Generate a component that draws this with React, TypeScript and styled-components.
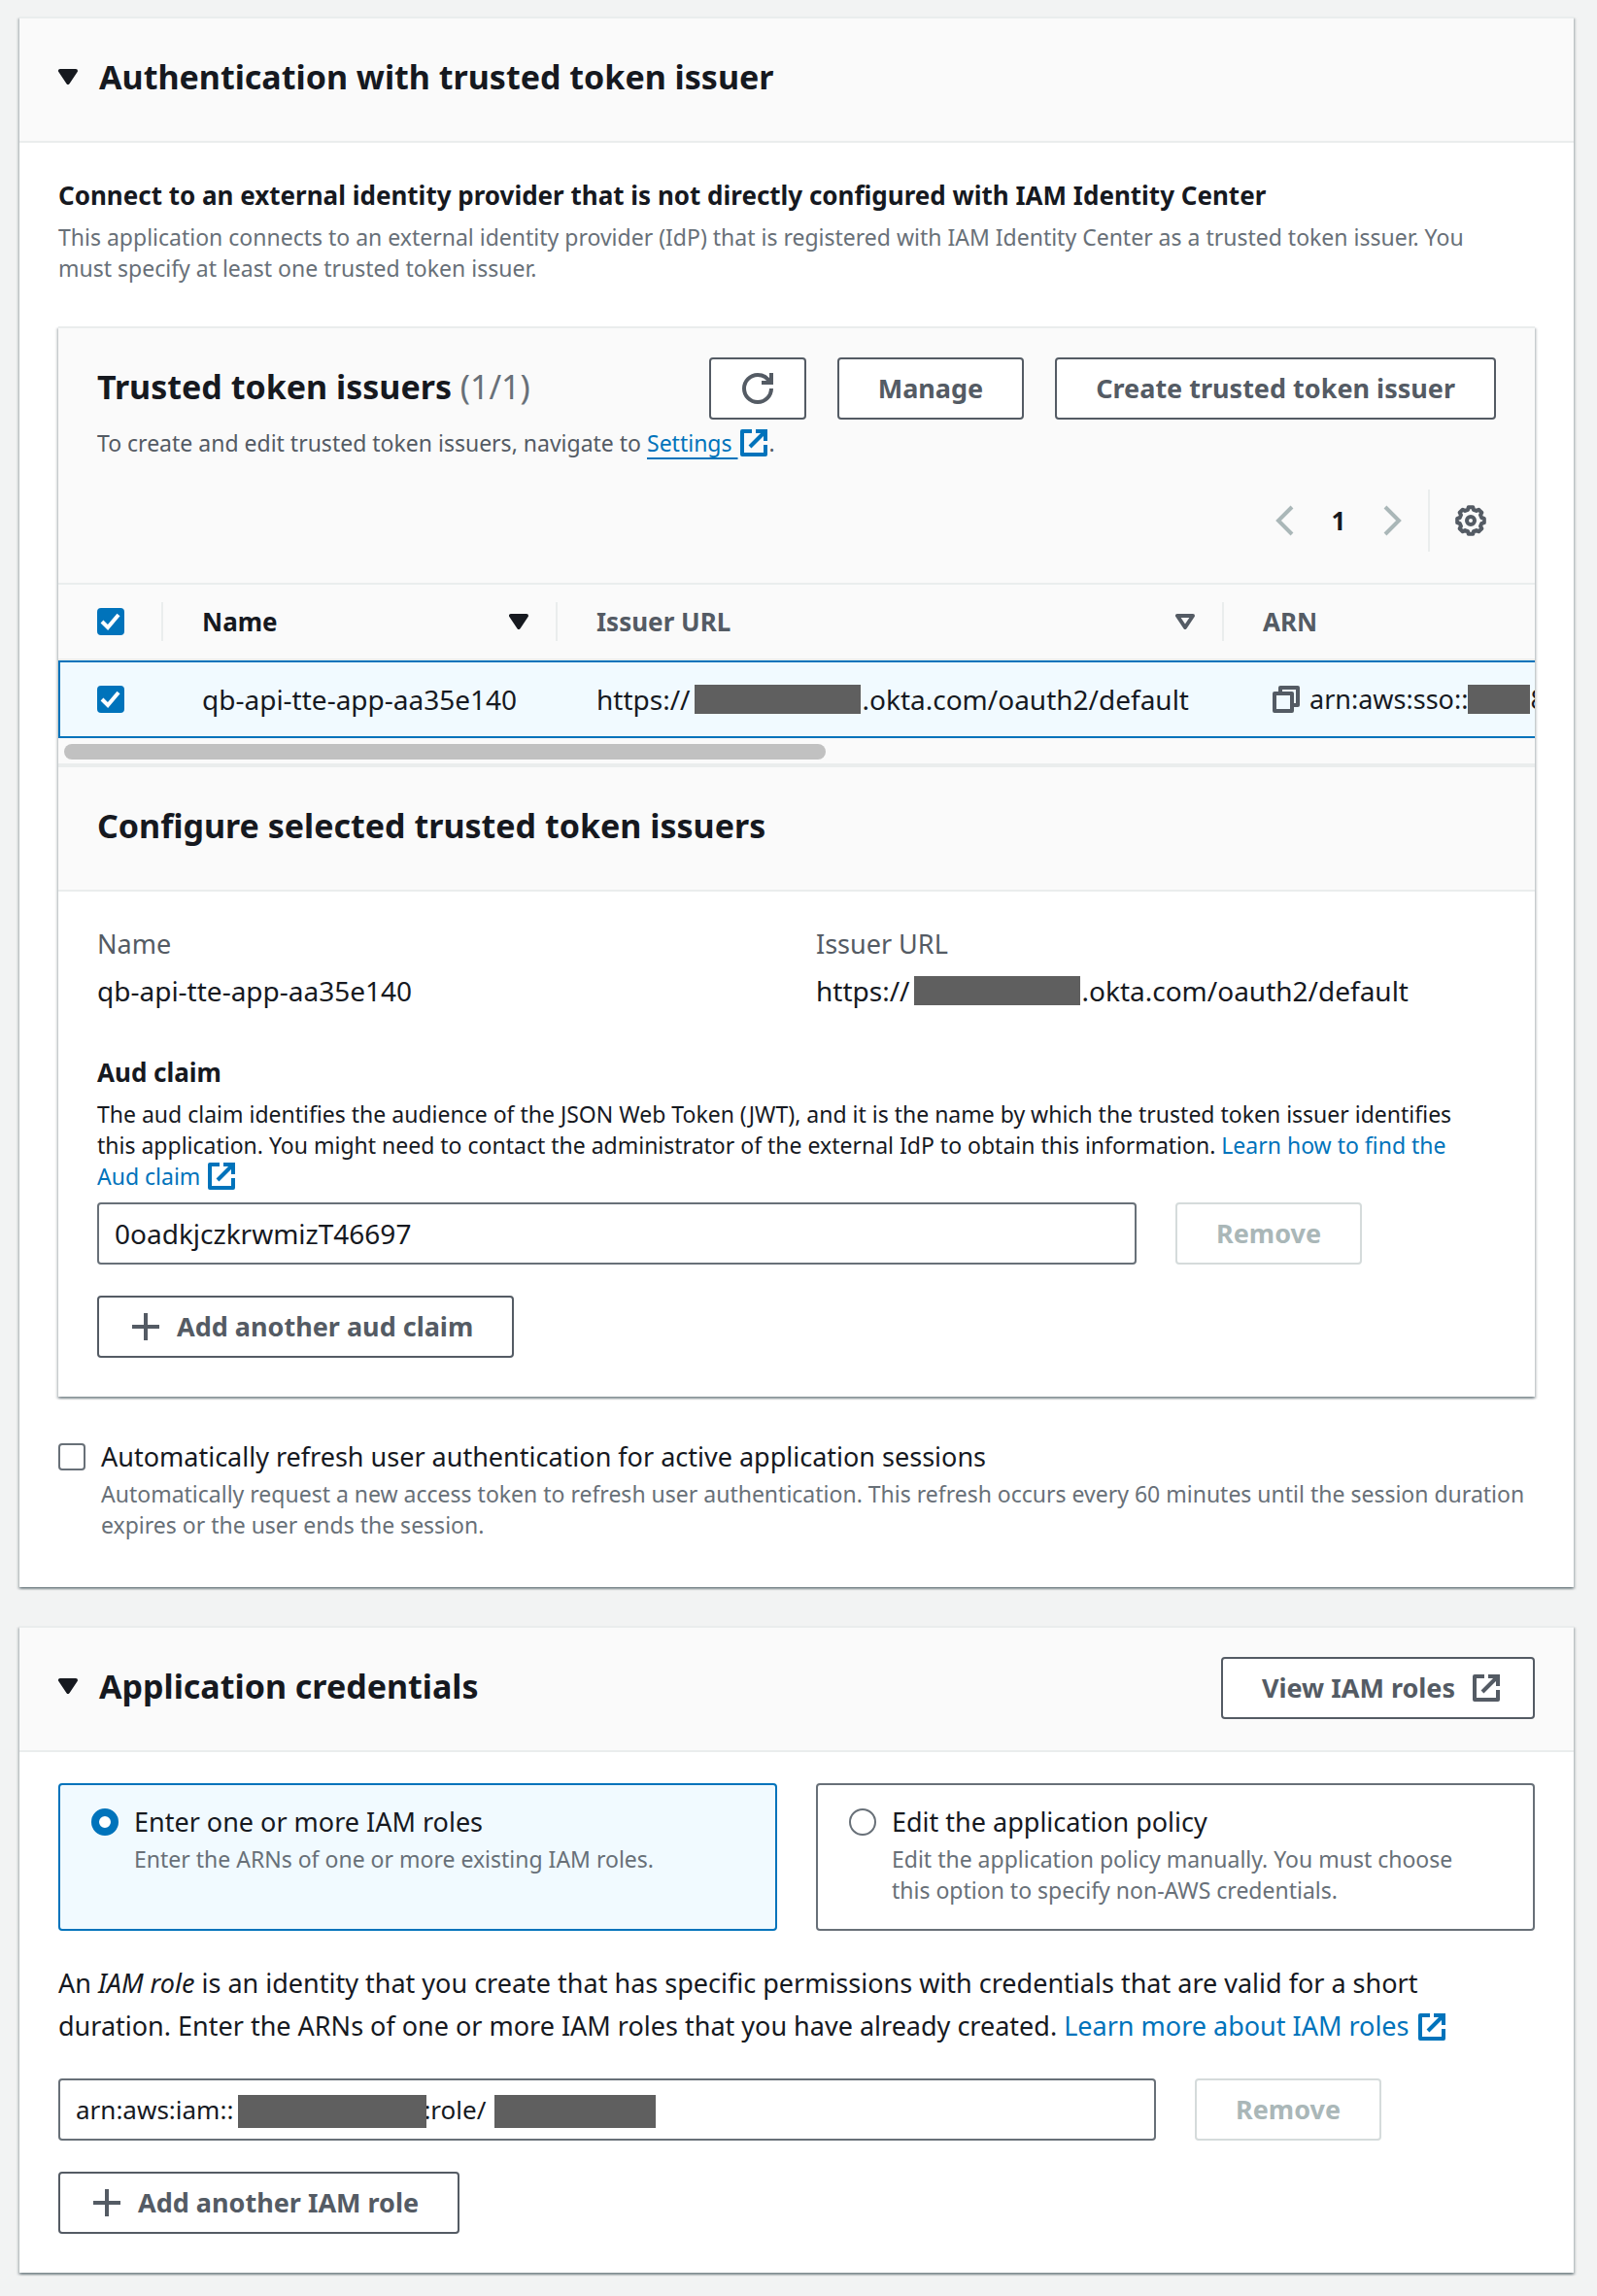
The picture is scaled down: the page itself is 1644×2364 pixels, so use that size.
import React, { useState } from 'react';
import styled, { createGlobalStyle, css } from 'styled-components';

const color = {
  page: '#f2f3f3',
  panel: '#ffffff',
  header: '#fafafa',
  line: '#eaeded',
  text: '#16191f',
  label: '#545b64',
  hint: '#687078',
  link: '#0073bb',
  selected: '#f1faff',
  disabledText: '#aab7b8',
  disabledLine: '#d5dbdb',
  thumb: '#c1c1c1',
  redacted: '#5f5f5f',
};

const size = { title: '34px', data: '28px', body: '27px', strong: '26px', small: '23px' };

const GlobalStyle = createGlobalStyle`
  *, *::before, *::after { box-sizing: border-box; }
  body {
    margin: 0;
    background: ${color.page};
    color: ${color.text};
    font-family: "Noto Sans", "Open Sans", sans-serif;
    font-size: ${size.body};
    line-height: 44px;
  }
  h2, h3, p, dl, dt, dd { margin: 0; }
  button, input { font-family: inherit; }
`;

const Page = styled.main`
  display: flex;
  flex-direction: column;
  gap: 40px;
  padding: 17px 24px 24px 20px;
`;

const Panel = styled.section`
  min-width: 0;
  border-top: 2px solid ${color.line};
  background: ${color.panel};
  box-shadow: 0 2px 2px 0 rgba(0, 28, 36, 0.3), 2px 2px 2px 0 rgba(0, 28, 36, 0.15),
    -2px 2px 2px 0 rgba(0, 28, 36, 0.15);
`;

const PanelHeader = styled.header`
  padding: 30px 40px 32px;
  border-bottom: 2px solid ${color.line};
  background: ${color.header};
`;

const HeaderRow = styled.div`
  display: flex;
  align-items: flex-start;
  justify-content: space-between;
  gap: 32px;
  min-height: 64px;
`;

const Title = styled.h2`
  font-size: ${size.title};
  font-weight: 700;
  line-height: 60px;
`;

const Counter = styled.span`
  color: ${color.hint};
  font-weight: 400;
`;

const Toggle = styled.button`
  display: flex;
  align-items: center;
  gap: 22px;
  padding: 0;
  border: 0;
  background: none;
  color: inherit;
  font-size: inherit;
  font-weight: inherit;
  line-height: inherit;
  text-align: left;
`;

const PanelBody = styled.div`
  padding: ${({ $bottom = 40 }: { $bottom?: number }) => `32px 40px ${$bottom}px`};
`;

const Actions = styled.div`
  display: flex;
  gap: 32px;
`;

const Button = styled.button<{ $icon?: 'only' | 'left' | 'right' }>`
  display: inline-flex;
  align-items: center;
  gap: 18px;
  height: 64px;
  padding: 0 ${({ $icon }) => ($icon === 'only' ? '32px' : '40px')};
  ${({ $icon }) => $icon === 'left' && css`padding-left: 34px;`}
  ${({ $icon }) => $icon === 'right' && css`padding-right: 34px;`}
  border: 2px solid ${color.label};
  border-radius: 4px;
  background: ${color.panel};
  color: ${color.label};
  font-size: ${size.body};
  font-weight: 700;
  line-height: 40px;
  white-space: nowrap;

  &:disabled {
    border-color: ${color.disabledLine};
    color: ${color.disabledText};
  }
`;

const Glyph = styled.svg`
  display: block;
  flex: none;
  fill: none;
  stroke: currentColor;
  stroke-width: 2;
`;

const LinkGlyph = styled(Glyph)`
  display: inline-block;
  margin: 0 2px;
  vertical-align: -5px;
`;

const Link = styled.a`
  color: ${color.link};
  text-decoration: none;
`;

const Underlined = styled.span`
  text-decoration: underline;
  text-decoration-thickness: 2px;
  text-decoration-skip-ink: none;
  text-underline-offset: 6px;
`;

const StrongLabel = styled.h3`
  font-size: ${size.strong};
  font-weight: 700;
  line-height: 44px;
`;

const FieldLabel = styled(StrongLabel).attrs({ as: 'label' })`
  display: block;
`;

const Small = styled.p`
  color: ${color.hint};
  font-size: ${size.small};
  line-height: 32px;
`;

const Description = styled(Small)<{ $tone?: string; $gap?: number }>`
  margin-top: ${({ $gap = 5 }) => $gap}px;
  padding-right: 24px;
  color: ${({ $tone = color.hint }) => $tone};
`;

const Nested = styled.div`
  margin: 44px 0 40px;
`;

const Pager = styled.nav`
  display: flex;
  align-items: center;
  justify-content: flex-end;
  height: 64px;
  margin-top: 32px;
`;

const BareButton = styled.button`
  display: flex;
  padding: 0;
  border: 0;
  background: none;
  color: ${color.label};

  &:disabled { color: ${color.disabledText}; }
`;

const PageNumber = styled(BareButton)`
  justify-content: center;
  width: 80px;
  color: ${color.text};
  font-size: ${size.strong};
  font-weight: 700;
`;

const Preferences = styled.div`
  display: flex;
  align-items: center;
  height: 64px;
  margin-left: 20px;
  padding: 0 10px 0 26px;
  border-left: 2px solid ${color.line};
`;

const TableScroll = styled.div`
  overflow: hidden;
  background: ${color.header};
`;

const Table = styled.table`
  width: 190%;
  border-collapse: separate;
  border-spacing: 0;
  table-layout: fixed;
`;

const Col = styled.col<{ $width?: number }>`
  ${({ $width }) => $width && css`width: ${$width}px;`}
`;

const HeadCell = styled.th<{ $active?: boolean }>`
  height: 78px;
  padding: 0;
  border-bottom: 2px solid ${color.line};
  color: ${({ $active }) => ($active ? color.text : color.label)};
  font-size: ${size.strong};
  font-weight: 700;
  text-align: left;
`;

const HeadContent = styled.div<{ $last?: boolean }>`
  display: flex;
  align-items: center;
  justify-content: space-between;
  height: 40px;
  padding: 0 28px 0 40px;
  border-right: ${({ $last }) => ($last ? '0' : `2px solid ${color.line}`)};
`;

const Cell = styled.td`
  height: 80px;
  padding: 0 0 0 40px;
  border: 2px solid ${color.link};
  border-width: 2px 0;
  background: ${color.selected};
  font-size: ${size.data};

  &:first-child { padding-left: 38px; border-left-width: 2px; }
`;

const ArnCell = styled(Cell)`
  font-size: ${size.body};
`;

const Inline = styled.div`
  display: flex;
  align-items: center;
  white-space: nowrap;
`;

const CopyButton = styled(BareButton)`
  margin: 0 10px;
`;

const Redacted = styled.span<{ $width: number }>`
  flex: none;
  width: ${({ $width }) => $width}px;
  height: 30px;
  background: ${color.redacted};
`;

const HostRedacted = styled(Redacted)`
  margin: 0 2px 0 4px;
`;

const ScrollTrack = styled.div`
  padding: 6px 6px 4px;
  border-bottom: 4px solid ${color.line};
  background: ${color.header};
`;

const ScrollThumb = styled.div`
  width: 52%;
  height: 16px;
  border-radius: 8px;
  background: ${color.thumb};
`;

const CheckFrame = styled.span`
  display: grid;
  flex: none;
  width: 28px;
  height: 28px;

  > * { grid-area: 1 / 1; }
  > svg { color: #fff; stroke-width: 4; pointer-events: none; }
`;

const CheckInput = styled.input.attrs({ type: 'checkbox' })`
  appearance: none;
  width: 28px;
  height: 28px;
  margin: 0;
  border: 2px solid ${color.hint};
  border-radius: 4px;
  background: ${color.panel};

  &:checked { border-color: ${color.link}; background: ${color.link}; }
`;

const RadioInput = styled.input.attrs({ type: 'radio' })`
  appearance: none;
  flex: none;
  width: 28px;
  height: 28px;
  margin: 8px 0;
  border: 2px solid ${color.hint};
  border-radius: 50%;
  background: ${color.panel};

  &:checked { border: 8px solid ${color.link}; }
`;

const Details = styled.dl`
  display: grid;
  grid-template-columns: 1fr 1fr;
  gap: 40px;
  margin-bottom: 40px;

  dt { margin-bottom: 4px; color: ${color.label}; font-size: ${size.body}; }
  dd { font-size: ${size.data}; }
`;

const FieldRow = styled.div`
  display: grid;
  grid-template-columns: repeat(4, 1fr);
  gap: 40px;
  margin: ${({ $top }: { $top: number }) => $top}px 0 32px;

  > :first-child { grid-column: span 3; }
  > :last-child { justify-self: start; }
`;

const InputFrame = styled.div`
  position: relative;
`;

const TextInput = styled.input.attrs({ type: 'text' })<{ $compact?: boolean }>`
  display: block;
  width: 100%;
  height: 64px;
  padding: 0 16px;
  border: 2px solid ${color.hint};
  border-radius: 4px;
  background: ${color.panel};
  color: ${color.text};
  font-size: ${({ $compact }) => ($compact ? size.strong : size.data)};
`;

const Cover = styled.span<{ $left: number; $width: number }>`
  position: absolute;
  top: 17px;
  left: ${({ $left }) => $left}px;
  width: ${({ $width }) => $width}px;
  height: 34px;
  background: ${color.redacted};
`;

const Option = styled.label`
  display: flex;
  gap: 16px;

  > ${CheckFrame} { margin: 8px 0; }
`;

const OptionText = styled.span`
  display: block;
`;

const Hint = styled(Small).attrs({ as: 'span' })`
  display: block;
`;

const Tiles = styled.div`
  display: grid;
  grid-template-columns: 1fr 1fr;
  gap: 40px;
  margin-bottom: 32px;
`;

const Tile = styled(Option)<{ $selected: boolean }>`
  padding: 16px 40px 24px 32px;
  border: 2px solid ${({ $selected }) => ($selected ? color.link : color.hint)};
  border-radius: 4px;
  background: ${({ $selected }) => ($selected ? color.selected : color.panel)};
`;

const TriangleIcon = ({ hollow }: { hollow?: boolean }) => (
  <Glyph width="20" height="16" viewBox="3 4 10 8" strokeLinejoin="round" aria-hidden="true">
    <path d="M4 5h8l-4 6z" fill={hollow ? 'none' : 'currentColor'} />
  </Glyph>
);

const externalShape = (
  <>
    <path d="M10 2h4v4" strokeLinecap="square" />
    <path d="m6 10 8-8" />
    <path d="M14 9.05V14H2V2h5" strokeLinejoin="round" />
  </>
);

const ExternalIcon = () => (
  <Glyph width="28" height="28" viewBox="1 1 14 14" aria-hidden="true">{externalShape}</Glyph>
);

const ExternalLinkIcon = () => (
  <LinkGlyph width="28" height="28" viewBox="1 1 14 14" role="img" aria-label="Opens in a new tab">
    {externalShape}
  </LinkGlyph>
);

const RefreshIcon = () => (
  <Glyph width="32" height="32" viewBox="0 0 16 16" aria-hidden="true">
    <path d="M10 5h5V0" />
    <path d="M15 8c0 3.87-3.13 7-7 7s-7-3.13-7-7 3.13-7 7-7c2.79 0 5.2 1.63 6.33 4" />
  </Glyph>
);

const ChevronIcon = ({ next }: { next?: boolean }) => (
  <Glyph width="32" height="32" viewBox="0 0 16 16" aria-hidden="true">
    <path d={next ? 'm4 1 7 7-7 7' : 'M12 1 5 8l7 7'} />
  </Glyph>
);

const gearOutline = (() => {
  const points: string[] = [];
  const add = (degrees: number, radius: number) => {
    const a = (degrees * Math.PI) / 180;
    points.push(`${(8 + radius * Math.cos(a)).toFixed(2)} ${(8 + radius * Math.sin(a)).toFixed(2)}`);
  };
  for (let tooth = 0; tooth < 8; tooth += 1) {
    const mid = tooth * 45;
    add(mid - 15, 5.8);
    add(mid - 9, 7);
    add(mid + 9, 7);
    add(mid + 15, 5.8);
  }
  return `M${points.join('L')}Z`;
})();

const GearIcon = () => (
  <Glyph width="32" height="32" viewBox="0 0 16 16" strokeLinejoin="round" aria-hidden="true">
    <path d={gearOutline} />
    <circle cx="8" cy="8" r="2" />
  </Glyph>
);

const CopyIcon = () => (
  <Glyph width="28" height="28" viewBox="1 1 14 14" strokeLinejoin="round" aria-hidden="true">
    <path d="M2 5h9v9H2z" />
    <path d="M5 5V2h9v9h-3" />
  </Glyph>
);

const PlusIcon = () => (
  <Glyph width="28" height="28" viewBox="1 1 14 14" aria-hidden="true">
    <path d="M8 1v14M1 8h14" />
  </Glyph>
);

type CheckboxProps = {
  id?: string;
  label?: string;
  checked: boolean;
  onChange: (value: boolean) => void;
};

const Checkbox = ({ id, label, checked, onChange }: CheckboxProps) => (
  <CheckFrame>
    <CheckInput
      id={id}
      aria-label={label}
      checked={checked}
      onChange={(event) => onChange(event.target.checked)}
    />
    {checked && (
      <Glyph width="28" height="28" viewBox="0 0 28 28" aria-hidden="true">
        <path d="m5 14 6 6L22 7" />
      </Glyph>
    )}
  </CheckFrame>
);

const IssuerUrl = () => (
  <Inline>
    https://
    <HostRedacted $width={171} />
    .okta.com/oauth2/default
  </Inline>
);

const gap = (count: number) => '\u00a0'.repeat(count);

export default function App() {
  const [selected, setSelected] = useState(true);
  const [refresh, setRefresh] = useState(false);
  const [mode, setMode] = useState<'roles' | 'policy'>('roles');
  const [aud, setAud] = useState('0oadkjczkrwmizT46697');
  const [role, setRole] = useState(`arn:aws:iam::${gap(29)}:role/`);

  return (
    <>
      <GlobalStyle />
      <Page>
        <Panel>
          <PanelHeader>
            <HeaderRow>
              <Title>
                <Toggle type="button" aria-expanded="true">
                  <TriangleIcon />
                  Authentication with trusted token issuer
                </Toggle>
              </Title>
            </HeaderRow>
          </PanelHeader>
          <PanelBody $bottom={48}>
            <StrongLabel>
              Connect to an external identity provider that is not directly configured with IAM Identity Center
            </StrongLabel>
            <Description>
              This application connects to an external identity provider (IdP) that is registered with IAM
              Identity Center as a trusted token issuer. You must specify at least one trusted token issuer.
            </Description>

            <Nested>
              <Panel>
                <PanelHeader>
                  <HeaderRow>
                    <Title>
                      Trusted token issuers <Counter>(1/1)</Counter>
                    </Title>
                    <Actions>
                      <Button type="button" $icon="only" aria-label="Refresh"><RefreshIcon /></Button>
                      <Button type="button">Manage</Button>
                      <Button type="button">Create trusted token issuer</Button>
                    </Actions>
                  </HeaderRow>
                  <Description $tone={color.label} $gap={8}>
                    To create and edit trusted token issuers, navigate to{' '}
                    <Link href="#settings"><Underlined>Settings </Underlined><ExternalLinkIcon /></Link>.
                  </Description>
                  <Pager aria-label="Pagination">
                    <BareButton type="button" disabled aria-label="Previous page"><ChevronIcon /></BareButton>
                    <PageNumber type="button">1</PageNumber>
                    <BareButton type="button" disabled aria-label="Next page"><ChevronIcon next /></BareButton>
                    <Preferences>
                      <BareButton type="button" aria-label="Preferences"><GearIcon /></BareButton>
                    </Preferences>
                  </Pager>
                </PanelHeader>

                <TableScroll>
                  <Table>
                    <colgroup>
                      <Col $width={108} />
                      <Col $width={406} />
                      <Col $width={686} />
                      <Col />
                    </colgroup>
                    <thead>
                      <tr>
                        <HeadCell scope="col">
                          <HeadContent>
                            <Checkbox label="Select all issuers" checked={selected} onChange={setSelected} />
                          </HeadContent>
                        </HeadCell>
                        <HeadCell scope="col" $active>
                          <HeadContent>Name <TriangleIcon /></HeadContent>
                        </HeadCell>
                        <HeadCell scope="col">
                          <HeadContent>Issuer URL <TriangleIcon hollow /></HeadContent>
                        </HeadCell>
                        <HeadCell scope="col">
                          <HeadContent $last>ARN</HeadContent>
                        </HeadCell>
                      </tr>
                    </thead>
                    <tbody>
                      <tr>
                        <Cell>
                          <Checkbox label="Select qb-api-tte-app-aa35e140" checked={selected} onChange={setSelected} />
                        </Cell>
                        <Cell>qb-api-tte-app-aa35e140</Cell>
                        <Cell><IssuerUrl /></Cell>
                        <ArnCell>
                          <Inline>
                            <CopyButton type="button" aria-label="Copy ARN"><CopyIcon /></CopyButton>
                            arn:aws:sso::
                            <Redacted $width={64} />
                            8
                          </Inline>
                        </ArnCell>
                      </tr>
                    </tbody>
                  </Table>
                </TableScroll>
                <ScrollTrack><ScrollThumb /></ScrollTrack>

                <PanelHeader>
                  <HeaderRow>
                    <Title as="h3">Configure selected trusted token issuers</Title>
                  </HeaderRow>
                </PanelHeader>
                <PanelBody>
                  <Details>
                    <div>
                      <dt>Name</dt>
                      <dd>qb-api-tte-app-aa35e140</dd>
                    </div>
                    <div>
                      <dt>Issuer URL</dt>
                      <dd><IssuerUrl /></dd>
                    </div>
                  </Details>
                  <FieldLabel htmlFor="aud-claim">Aud claim</FieldLabel>
                  <Description $tone={color.text}>
                    The aud claim identifies the audience of the JSON Web Token (JWT), and it is the name by which
                    the trusted token issuer identifies this application. You might need to contact the
                    administrator of the external IdP to obtain this information.{' '}
                    <Link href="#aud-claim-help">Learn how to find the Aud claim <ExternalLinkIcon /></Link>
                  </Description>
                  <FieldRow $top={11}>
                    <TextInput id="aud-claim" value={aud} onChange={(event) => setAud(event.target.value)} />
                    <Button type="button" disabled>Remove</Button>
                  </FieldRow>
                  <Button type="button" $icon="left"><PlusIcon />Add another aud claim</Button>
                </PanelBody>
              </Panel>
            </Nested>

            <Option>
              <Checkbox checked={refresh} onChange={setRefresh} />
              <OptionText>
                Automatically refresh user authentication for active application sessions
                <Hint>
                  Automatically request a new access token to refresh user authentication. This refresh occurs
                  every 60 minutes until the session duration expires or the user ends the session.
                </Hint>
              </OptionText>
            </Option>
          </PanelBody>
        </Panel>

        <Panel>
          <PanelHeader>
            <HeaderRow>
              <Title>
                <Toggle type="button" aria-expanded="true">
                  <TriangleIcon />
                  Application credentials
                </Toggle>
              </Title>
              <Button type="button" $icon="right">View IAM roles<ExternalIcon /></Button>
            </HeaderRow>
          </PanelHeader>
          <PanelBody>
            <Tiles role="radiogroup" aria-label="Credential type">
              <Tile $selected={mode === 'roles'}>
                <RadioInput name="mode" checked={mode === 'roles'} onChange={() => setMode('roles')} />
                <OptionText>
                  Enter one or more IAM roles
                  <Hint>Enter the ARNs of one or more existing IAM roles.</Hint>
                </OptionText>
              </Tile>
              <Tile $selected={mode === 'policy'}>
                <RadioInput name="mode" checked={mode === 'policy'} onChange={() => setMode('policy')} />
                <OptionText>
                  Edit the application policy
                  <Hint>
                    Edit the application policy manually. You must choose this option to specify non-AWS
                    credentials.
                  </Hint>
                </OptionText>
              </Tile>
            </Tiles>
            <p>
              An <em>IAM role</em> is an identity that you create that has specific permissions with credentials
              that are valid for a short duration. Enter the ARNs of one or more IAM roles that you have already
              created. <Link href="#iam-roles-help">Learn more about IAM roles <ExternalLinkIcon /></Link>
            </p>
            <FieldRow $top={32}>
              <InputFrame>
                <TextInput
                  $compact
                  aria-label="IAM role ARN"
                  value={role}
                  onChange={(event) => setRole(event.target.value)}
                />
                <Cover $left={185} $width={194} />
                <Cover $left={449} $width={166} />
              </InputFrame>
              <Button type="button" disabled>Remove</Button>
            </FieldRow>
            <Button type="button" $icon="left"><PlusIcon />Add another IAM role</Button>
          </PanelBody>
        </Panel>
      </Page>
    </>
  );
}
